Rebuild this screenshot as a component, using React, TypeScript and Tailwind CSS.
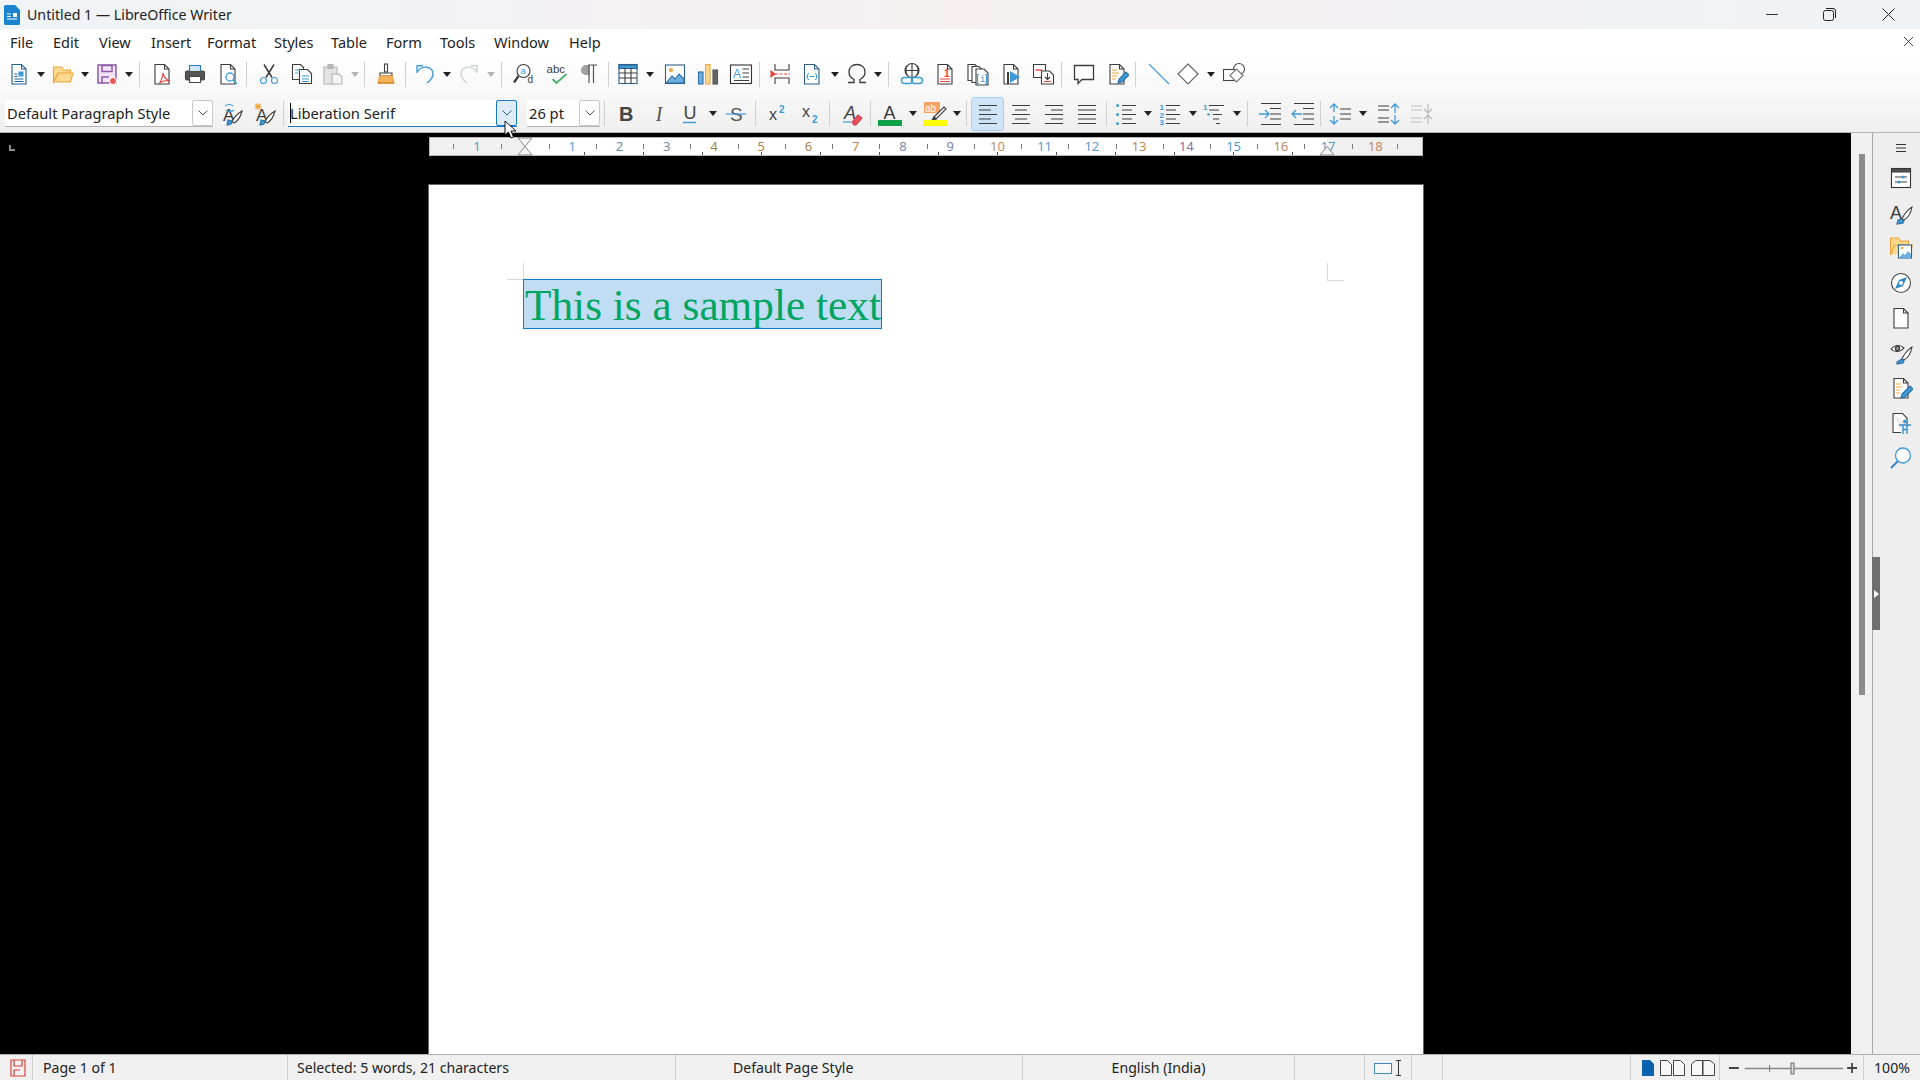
import type { ReactNode } from 'react'

const DK = '#3c3c3c'
const BL = '#3f9bd8'
const OR = '#f2a33a'
const GR = '#b4b4b4'

function I({ children, size = 24 }: { children: ReactNode; size?: number }) {
  return (
    <svg width={size} height={size} viewBox="0 0 24 24" fill="none" stroke={DK} strokeWidth="1.1">
      {children}
    </svg>
  )
}

const Page = ({ s = DK, fill = '#fff' }: { s?: string; fill?: string }) => (
  <path d="M5 2.500h9.500l4.500 4.500v15H5zM14.500 2.500V7H19" stroke={s} fill={fill} />
)

const icons: Record<string, ReactNode> = {
  new: (
    <>
      <Page s="#1f5f93" />
      <path d="M7.500 12h3M7.500 14.500h3M7.500 17h9M7.500 19.500h9" stroke="#1f5f93" />
      <rect x="11.500" y="9.500" width="5" height="5" fill={BL} stroke="none" />
    </>
  ),
  open: <path d="M2.500 20V5h8l2 3h7v3H7.500zM2.500 20h17l2.500-9H7z" fill="#fbd88f" stroke={OR} />,
  save: (
    <>
      <path d="M3 3h18v18H3z" fill="#f0e4f5" stroke="#8d5aa9" strokeWidth="1.500" />
      <path d="M7 3.500h10v6H7zM7 21v-6h7" stroke="#8d5aa9" strokeWidth="1.500" />
      <circle cx="18" cy="19" r="3.500" fill="#ea5a5a" stroke="#fff" />
    </>
  ),
  pdf: (
    <>
      <Page />
      <path d="M13 11c1 4 3 7 7 8-4-1-9 0-11 3 2-3 4-7 4-11z" stroke="#e0483e" fill="none" />
    </>
  ),
  print: (
    <>
      <rect x="2.500" y="9" width="19" height="9" rx="1.500" fill="#555" stroke="#444" />
      <path d="M6.500 9V3.500h11V9" fill="#cfe6f6" stroke="#2f7fb8" />
      <path d="M6.500 14.500h11v6h-11z" fill="#fff" stroke="#444" />
    </>
  ),
  preview: (
    <>
      <Page />
      <circle cx="14" cy="15" r="4" stroke={BL} fill="#fff" strokeWidth="1.300" />
      <path d="M17 18l4 4" stroke={BL} strokeWidth="1.600" />
    </>
  ),
  cut: (
    <>
      <path d="M7 2.500l8 13M17 2.500l-8 13" strokeWidth="1.500" />
      <circle cx="6.500" cy="18.500" r="3" stroke={BL} />
      <circle cx="17.500" cy="18.500" r="3" stroke={BL} />
    </>
  ),
  copy: (
    <>
      <path d="M2.500 2.500h8l3 3v12h-11z" fill="#fff" />
      <path d="M9.500 7.500h8l4 4v10h-12z" fill="#fff" />
      <path d="M5 8h5M5 11h3M12 14h7M12 17h7M12 19.500h7" stroke={BL} />
    </>
  ),
  paste: (
    <>
      <path d="M3 5h13v17H3z" fill="#e4e4e4" stroke={GR} />
      <rect x="7" y="2.500" width="5" height="4" fill="#bbb" stroke={GR} />
      <path d="M11 12h7l3 3v7H11z" fill="#f4f4f4" stroke={GR} />
    </>
  ),
  clone: (
    <>
      <path d="M10.500 2h3v8h-3z" fill="#fff" />
      <path d="M6 11h12v3H6z" fill="#fff" />
      <path d="M5.500 14h13l1.500 7H4z" fill="#f6b35e" stroke={OR} />
      <path d="M4 21h16" stroke="#c96f14" />
    </>
  ),
  undo: (
    <>
      <path d="M4.500 9.500C9 3 19 4 20 11c.5 4-2 7-6 10" stroke={BL} strokeWidth="1.400" />
      <path d="M10 3.500L4 4v7" stroke={BL} strokeWidth="1.400" />
    </>
  ),
  redo: (
    <>
      <path d="M19.500 9.500C15 3 5 4 4 11c-.5 4 2 7 6 10" stroke="#cfd3d6" strokeWidth="1.400" />
      <path d="M14 3.500l6 .5v7" stroke="#cfd3d6" strokeWidth="1.400" />
    </>
  ),
  find: (
    <>
      <circle cx="11.500" cy="9" r="6.500" />
      <path d="M6.500 14L2 20.500" strokeWidth="2.200" />
      <text x="8.500" y="12" fontSize="9.500" fill={BL} stroke="none" fontFamily="Liberation Sans">a</text>
      <text x="15.500" y="21" fontSize="10" fill={DK} stroke="none" fontFamily="Liberation Sans">d</text>
    </>
  ),
  spell: (
    <>
      <text x="1.500" y="11" fontSize="11.500" fill={DK} stroke="none" fontFamily="Liberation Sans">abc</text>
      <path d="M7.500 17l4 4 10-9" stroke="#45b36b" strokeWidth="1.800" />
    </>
  ),
  pilcrow: (
    <>
      <path d="M11 3.500H8a4.500 4.500 0 000 9h3z" fill="#a0a0a0" stroke="#a0a0a0" />
      <path d="M11 3v18M15.500 3v18M10 3h9" stroke="#555" strokeWidth="1.200" />
    </>
  ),
  table: (
    <>
      <rect x="3" y="2.500" width="18" height="19" fill="#fff" stroke="#2c5f88" />
      <path d="M3 3h18v3.500H3z" fill={BL} stroke="#2c5f88" />
      <path d="M3 11h18M3 16h18M9 6.500v15M15 6.500v15" stroke={DK} />
    </>
  ),
  image: (
    <>
      <rect x="2.500" y="3" width="19" height="18.500" fill="#fff" stroke="#2c5f88" />
      <circle cx="8" cy="8" r="2" fill={OR} stroke="none" />
      <path d="M3 21l6-7 3 3 4-5 5 5v4z" fill="#6eaee0" stroke="#2c6ea0" />
    </>
  ),
  chart: (
    <>
      <rect x="2.500" y="10" width="4.500" height="12" fill="#6eaee0" stroke="#2c6ea0" />
      <rect x="9.500" y="2.500" width="4.500" height="19.500" fill="#fbd88f" stroke={OR} />
      <rect x="17" y="8" width="4.500" height="14" fill="#666" stroke="#555" />
    </>
  ),
  textbox: (
    <>
      <rect x="1.500" y="3" width="21" height="18.500" fill="#fff" stroke="#333" />
      <text x="4" y="16" fontSize="12" fill={BL} stroke="none" fontFamily="Liberation Sans">A</text>
      <path d="M13.500 7h6.500M13.500 11h6.500M13.500 15h6.500M5 18.500h15" />
    </>
  ),
  pagebreak: (
    <>
      <path d="M5 2v6h14V2M5 22v-6h14v6" />
      <path d="M5 12h15" stroke="#e0483e" strokeDasharray="3 1.500" />
      <path d="M1 9l4 3-4 3z" fill="#e0483e" stroke="#e0483e" />
    </>
  ),
  field: (
    <>
      <path d="M4.500 2.500h10l4.500 4.500v15H4.500zM14.500 2.500V7H19" stroke="#2c5f88" fill="#fff" />
      <path d="M9 11.500c-2 0-1 2-2 3 1 1 0 3 2 3M15 11.500c2 0 1 2 2 3-1 1 0 3-2 3M9.500 14.500h5" stroke={BL} />
    </>
  ),
  omega: <path d="M3 20.500h6v-3c-3-1.500-5-4-5-7.500 0-5 3.500-7.500 8-7.500s8 2.500 8 7.500c0 3.500-2 6-5 7.500v3h6" strokeWidth="1.300" />,
  link: (
    <>
      <circle cx="12" cy="8.500" r="7" />
      <path d="M5 8.500h14M12 1.500v14M7.500 3.500c-2 3-2 7 0 10M16.500 3.500c2 3 2 7 0 10" />
      <rect x="1.500" y="15.500" width="11" height="6" rx="3" fill="#fff" stroke={BL} strokeWidth="1.400" />
      <rect x="11.500" y="15.500" width="11" height="6" rx="3" stroke={BL} strokeWidth="1.400" />
    </>
  ),
  foot: (
    <>
      <Page />
      <text x="11" y="14.500" fontSize="10" fill="#e0483e" stroke="none" fontFamily="Liberation Sans" fontWeight="700">1</text>
      <path d="M7 17h10M7 19.500h10" stroke="#e0483e" />
    </>
  ),
  end: (
    <>
      <path d="M2 2.500h7l3 3v13H2z" fill="#fff" />
      <path d="M6 4.500h7l3 3v13H6z" fill="#fff" />
      <path d="M10 7h8l4 4v12H10z" fill="#fff" />
      <text x="14" y="20" fontSize="9" fill={BL} stroke="none" fontFamily="Liberation Mono">i</text>
      <path d="M13 12.500h-1.500v9H13M19 12.500h1.500v9H19" stroke={BL} />
    </>
  ),
  bookmark: (
    <>
      <Page />
      <path d="M9 10v12" strokeWidth="2" />
      <path d="M11 9l10 6-10 6z" fill={BL} stroke="none" />
    </>
  ),
  cross: (
    <>
      <path d="M1.500 2.500h12v13h-12z" fill="#fff" />
      <path d="M9.500 9h8l4 4v9h-12z" fill="#fff" />
      <path d="M3.500 8h7" stroke="#e0483e" strokeWidth="1.400" />
      <path d="M15.500 11v6M13 15l2.500 2.500 2.500-2.500" />
      <path d="M12 19.500h7" stroke="#e0483e" />
    </>
  ),
  comment: <path d="M2.500 3.500h19v14H10l-4 4v-4H2.500z" fill="#fff" strokeWidth="1.300" />,
  track: (
    <>
      <Page />
      <path d="M7 8h5M7 11h7M7 14h5M7 17h4" stroke={OR} />
      <path d="M13 21l1-4 7-7 3 3-7 7z" fill={BL} stroke="#2c6ea0" />
    </>
  ),
  line: <path d="M3 2l20 20" stroke={BL} strokeWidth="1.100" />,
  shape: <path d="M12 2l10 10-10 10L2 12z" stroke="#666" strokeWidth="1.200" fill="#fff" />,
  draw: (
    <>
      <circle cx="17" cy="7" r="5.500" fill="#fff" stroke="#444" />
      <rect x="1.500" y="7.500" width="11" height="11" fill="#fff" stroke="#444" />
      <path d="M14.500 7l6.500 6.500-6.500 6.500L8 13.500z" fill="#fff" stroke="#777" />
    </>
  ),
  updateStyle: (
    <>
      <text x="3" y="19" fontSize="17" fill={DK} stroke="none" fontFamily="Liberation Sans">A</text>
      <path d="M12 20c1-3 5-8 10-11-1 4-4 10-8 12z" fill="#fff" />
      <path d="M8 18l4 1-1 3-4 1z" fill={BL} stroke="#2c6ea0" />
      <path d="M5 4c2-2 6-2 8 0M6 8c2 2 6 2 8 0" stroke={BL} />
    </>
  ),
  newStyle: (
    <>
      <text x="3" y="19" fontSize="17" fill={DK} stroke="none" fontFamily="Liberation Sans">A</text>
      <path d="M12 20c1-3 5-8 10-11-1 4-4 10-8 12z" fill="#fff" />
      <path d="M8 18l4 1-1 3-4 1z" fill={BL} stroke="#2c6ea0" />
      <path d="M5 1v7M1.500 4.500h7M2.500 2l5 5M7.500 2l-5 5" stroke={OR} />
    </>
  ),
  bold: <text x="5" y="19" fontSize="20" fontWeight="700" fill="#444" stroke="none" fontFamily="Liberation Sans">B</text>,
  italic: <text x="8.700" y="19" fontSize="20" fontStyle="italic" fill="#555" stroke="none" fontFamily="Liberation Serif">I</text>,
  underline: (
    <>
      <text x="5.500" y="17" fontSize="18" fill="#444" stroke="none" fontFamily="Liberation Sans">U</text>
      <path d="M5 20.500h13" stroke={BL} strokeWidth="1.400" />
    </>
  ),
  strike: (
    <>
      <text x="6" y="19" fontSize="19" fill="#555" stroke="none" fontFamily="Liberation Sans">S</text>
      <path d="M2 12h20" stroke={BL} strokeWidth="1.200" />
    </>
  ),
  sup: (
    <>
      <text x="3" y="18" fontSize="16" fill="#444" stroke="none" fontFamily="Liberation Sans">x</text>
      <text x="13" y="11" fontSize="10" fontWeight="700" fill={BL} stroke="none" fontFamily="Liberation Sans">2</text>
    </>
  ),
  sub: (
    <>
      <text x="3" y="15" fontSize="16" fill="#444" stroke="none" fontFamily="Liberation Sans">x</text>
      <text x="13" y="21" fontSize="10" fontWeight="700" fill={BL} stroke="none" fontFamily="Liberation Sans">2</text>
    </>
  ),
  clear: (
    <>
      <text x="4" y="17" fontSize="18" fontStyle="italic" fill="#444" stroke="none" fontFamily="Liberation Sans">A</text>
      <path d="M3 20h8" stroke={BL} strokeWidth="1.200" />
      <path d="M12 20l6-7 4 3-6 7h-2z" fill="#e8505b" stroke="#d8404b" />
    </>
  ),
  fontColor: (
    <>
      <text x="5.500" y="17" fontSize="18" fill="#3a3a3a" stroke="none" fontFamily="Liberation Sans">A</text>
      <rect x="0" y="18" width="24" height="6" fill="#0fa14a" stroke="none" />
    </>
  ),
  highlight: (
    <>
      <rect x="1" y="0" width="16" height="11" fill="#f5a560" stroke="none" />
      <text x="2" y="10" fontSize="10" fill="#fff" stroke="none" fontFamily="Liberation Sans">ab</text>
      <path d="M11 15l10-10 2 2-10 10z" fill="#fff" />
      <path d="M9 18l2-3 2 2z" fill="#333" />
      <rect x="0" y="18" width="24" height="6" fill="#ffff00" stroke="none" />
    </>
  ),
  left: <path d="M3 3.500h18M3 8h12M3 12.500h18M3 17h12M3 21.500h18" />,
  center: <path d="M3 3.500h18M6 8h12M3 12.500h18M6 17h12M3 21.500h18" />,
  right: <path d="M3 3.500h18M9 8h12M3 12.500h18M9 17h12M3 21.500h18" />,
  justify: <path d="M3 3.500h18M3 8h18M3 12.500h18M3 17h18M3 21.500h18" />,
  bullets: (
    <>
      <path d="M8 3.500h14M8 8h10M8 12.500h14M8 17h10M8 21.500h14" />
      <circle cx="3.500" cy="3.500" r="1.500" fill={BL} stroke="none" />
      <circle cx="3.500" cy="12.500" r="1.500" fill={BL} stroke="none" />
      <circle cx="3.500" cy="21.500" r="1.500" fill={BL} stroke="none" />
    </>
  ),
  numbered: (
    <>
      <path d="M8 3.500h14M8 8h10M8 12.500h14M8 17h10M8 21.500h14" />
      <text x="1.500" y="8" fontSize="8" fontWeight="700" fill={BL} stroke="none" fontFamily="Liberation Sans">1</text>
      <text x="1.500" y="15.500" fontSize="8" fontWeight="700" fill={BL} stroke="none" fontFamily="Liberation Sans">2</text>
      <text x="1.500" y="23" fontSize="8" fontWeight="700" fill={BL} stroke="none" fontFamily="Liberation Sans">3</text>
    </>
  ),
  outline: (
    <>
      <path d="M7 3.500h15M7 8h10M11 12.500h9M11 17h6M14 21.500h4" />
      <text x="1" y="8" fontSize="8" fontWeight="700" fill={BL} stroke="none" fontFamily="Liberation Sans">1</text>
      <circle cx="6.500" cy="12.500" r="1.300" fill={BL} stroke="none" />
    </>
  ),
  indentInc: (
    <>
      <path d="M3 1.500h20M12 6.500h11M12 12h11M12 17h11M3 22.500h20" />
      <path d="M1 12h10M7 8l4 4-4 4" stroke={BL} strokeWidth="1.300" />
    </>
  ),
  indentDec: (
    <>
      <path d="M3 1.500h20M12 6.500h11M12 12h11M12 17h11M3 22.500h20" />
      <path d="M11 12H1M5 8l-4 4 4 4" stroke={BL} strokeWidth="1.300" />
    </>
  ),
  spacing: (
    <>
      <path d="M12 7h11M12 12h11M12 17h11" />
      <path d="M6 2v8M2 6l4-4 4 4M6 14v8M2 18l4 4 4-4" stroke={BL} strokeWidth="1.300" />
    </>
  ),
  paraInc: (
    <>
      <path d="M2 4h11M2 8h11M2 16h11M2 20h11" />
      <path d="M19 11V2M15 6l4-4 4 4M19 13v9M15 18l4 4 4-4" stroke={BL} strokeWidth="1.300" />
    </>
  ),
  paraDec: (
    <>
      <path d="M2 4h11M2 8h11M2 16h11M2 20h11" stroke="#bdbdbd" />
      <path d="M19 2v9M15 7l4 4 4-4M19 22v-9M15 17l4-4 4 4" stroke="#bdbdbd" strokeWidth="1.300" />
    </>
  ),
  props: (
    <>
      <rect x="2.500" y="2.500" width="19" height="19" fill="#fff" stroke="#333" />
      <path d="M2.500 3h19v3h-19z" fill="#555" />
      <path d="M6 11h12M6 16h12" />
      <circle cx="14" cy="11" r="1.500" fill={BL} stroke="none" />
      <circle cx="10" cy="16" r="1.500" fill={BL} stroke="none" />
    </>
  ),
  styles: (
    <>
      <text x="1" y="18" fontSize="18" fill={DK} stroke="none" fontFamily="Liberation Sans">A</text>
      <path d="M13 18c1-3 5-9 10-12-1 5-4 11-8 13z" fill="#fff" />
      <path d="M9 19l4-1 2 2-1 2-6 1z" fill={BL} stroke="#2c6ea0" />
    </>
  ),
  gallery: (
    <>
      <path d="M1.500 19V2h8l2 3h8v3M1.500 19l4-10h18l-3 8" fill="#fbd88f" stroke={OR} />
      <rect x="9.500" y="9" width="13" height="13" fill="#fff" stroke="#2c5f88" />
      <path d="M10 22l4-5 2 2 3-4 3 3v4z" fill="#6eaee0" stroke="none" />
      <circle cx="13" cy="12" r="1.300" fill={OR} stroke="none" />
    </>
  ),
  navigator: (
    <>
      <circle cx="12" cy="12" r="9.500" fill="#fff" stroke="#444" />
      <path d="M18 6l-8 3-4 9 8-3z" fill="#2f88c9" stroke="none" />
      <circle cx="12" cy="12" r="2" fill="#fff" stroke="none" />
    </>
  ),
  page: <path d="M5 2.500h9.500l4.500 4.500v15H5zM14.500 2.500V7H19" fill="#fff" />,
  inspector: (
    <>
      <path d="M2 8c3-4 9-5 13-1-3 4-10 5-13 1z" fill="#fff" />
      <circle cx="8.500" cy="7.500" r="2.200" fill="#888" />
      <path d="M13 18c1-3 5-9 10-12-1 5-4 11-8 13z" fill="#fff" />
      <path d="M8 21l5-3 2 2-1 2-6 1z" fill={BL} stroke="#2c6ea0" />
    </>
  ),
  manage: (
    <>
      <Page />
      <path d="M7 8h5M7 11h6M7 14h4M7 17h4" stroke={OR} />
      <path d="M12 22l1-4 8-8 3 3-8 8z" fill={BL} stroke="#2c6ea0" />
    </>
  ),
  access: (
    <>
      <path d="M4 2.500h9.500l4.500 4.500v6M12 21.500H4v-19" fill="#fff" />
      <circle cx="16" cy="10.500" r="2" fill={BL} stroke="none" />
      <path d="M10 14h12M14 14v9M18 14v9M14 18.500h4" stroke="#2f88c9" strokeWidth="1.300" />
    </>
  ),
  search: (
    <>
      <circle cx="14" cy="9.500" r="7.500" stroke={BL} fill="#fff" strokeWidth="1.300" />
      <path d="M9 15l-7 7" stroke="#2f88c9" strokeWidth="2" />
    </>
  ),
}

function Tool({ name, w = 'w-[33px]', active }: { name: string; w?: string; active?: boolean }) {
  return (
    <div
      className={`${w} h-[34px] shrink-0 flex items-center justify-center rounded-[3px] ${
        active ? 'bg-[#cde4f9] border border-[#a9d0f0]' : ''
      }`}
    >
      <I>{icons[name]}</I>
    </div>
  )
}

function Drop({ w = 'w-[14px]', off }: { w?: string; off?: boolean }) {
  return (
    <div className={`${w} h-[34px] shrink-0 flex items-center justify-center`}>
      <div
        className={`w-0 h-0 border-x-[4px] border-x-transparent border-t-[5px] ${
          off ? 'border-t-[#b4b4b4]' : 'border-t-[#222]'
        }`}
      />
    </div>
  )
}

const Sep = ({ m }: { m: string }) => <div className={`${m} w-px h-[25px] shrink-0 bg-[#cfcfcf]`} />

function Chevron({ blue }: { blue?: boolean }) {
  return (
    <svg width="10" height="6" viewBox="0 0 10 6" fill="none" stroke={blue ? '#1f5f93' : '#555'}>
      <path d="M.5.500L5 5l4.500-4.500" />
    </svg>
  )
}

function Combo({ text, w, focused }: { text: string; w: string; focused?: boolean }) {
  return (
    <div
      className={`${w} h-[27px] shrink-0 flex items-stretch bg-white border-b ${
        focused ? 'border-b-[#1a78c2]' : 'border-b-[#b5b5b5]'
      }`}
    >
      <div className="flex-1 flex items-center pl-[2px] text-[14.700px] text-[#222]">
        {focused && <div className="w-px h-[20px] bg-black mr-[-1px]" />}
        {text}
      </div>
      <div
        className={`w-[21px] flex items-center justify-center border rounded-[2px] ${
          focused ? 'bg-[#dfecf8] border-[#1a78c2]' : 'bg-white border-[#c8c8c8]'
        }`}
      >
        <Chevron blue={focused} />
      </div>
    </div>
  )
}

const menus = [
  ['File', 'w-[43px]'],
  ['Edit', 'w-[46px]'],
  ['View', 'w-[52px]'],
  ['Insert', 'w-[56px]'],
  ['Format', 'w-[67px]'],
  ['Styles', 'w-[57px]'],
  ['Table', 'w-[55px]'],
  ['Form', 'w-[54px]'],
  ['Tools', 'w-[54px]'],
  ['Window', 'w-[75px]'],
  ['Help', 'w-[50px]'],
]

function Ruler() {
  const nums = Array.from({ length: 18 }, (_, i) => i + 1)
  const numColors = ['#5a9ad0', '#6a86a8', '#7a8aa0', '#8a8a60', '#b08050', '#b08050', '#c08a60', '#7a86b0', '#7a86b0', '#c08a60', '#5a9ad0', '#5a9ad0', '#c08a50', '#8a70a8', '#5a9ad0', '#c08a60', '#5a9ad0', '#c08a60']
  return (
    <svg width="994" height="19" viewBox="0 0 994 19" className="block">
      <rect x="0.500" y="0.500" width="993" height="18" fill="#f0f0f0" stroke="#b5b5b5" />
      <rect x="96" y="1" width="802" height="17" fill="#fff" />
      <text x="48" y="14" fontSize="13" textAnchor="middle" fill="#5a9ad0" fontFamily="Noto Sans">1</text>
      <path d="M24.500 7v5M72.500 7v5" stroke="#777" />
      {nums.map((n, i) => {
        const x = 96 + 47.24 * n
        return (
          <g key={n}>
            <text x={x} y="14" fontSize="13" textAnchor="middle" fill={numColors[i]} fontFamily="Noto Sans">{n}</text>
            <path d={`M${Math.round(x - 23.6) + 0.5} 7v5`} stroke="#777" />
          </g>
        )
      })}
      <path d="M968.500 7v5" stroke="#777" />
      {Array.from({ length: 13 }, (_, i) => (
        <path key={i} d={`M${96 + 59 * (i + 1) + 0.5} 15v3`} stroke="#555" />
      ))}
      <path d="M89 1h14l-7 8.500zM89 18h14l-7-8.500z" fill="#f4f4f4" stroke="#888" />
      <path d="M891 18h14l-7-8.500z" fill="#f4f4f4" stroke="#888" />
    </svg>
  )
}

export default function App() {
  const stat = 'h-full flex items-center shrink-0 border-r border-[#cfcfcf]'
  return (
    <div
      className="w-[1920px] h-[1080px] flex flex-col overflow-hidden bg-black text-[#222]"
      style={{ fontFamily: '"Noto Sans", sans-serif' }}
    >
      {/* title bar */}
      <div className="h-[29px] shrink-0 flex items-center bg-gradient-to-r from-[#eff4f6] via-[#f6f0f1] to-[#eff3f5]">
        <svg width="16" height="20" viewBox="0 0 16 20" className="ml-[4px]">
          <path d="M1.500 0H11l5 5v13.500a1.500 1.500 0 01-1.500 1.500h-13A1.500 1.500 0 010 18.500v-17A1.500 1.500 0 011.500 0z" fill="#1b84cf" />
          <path d="M3 9h4M3 11.500h4M3 14h10" stroke="#fff" />
          <rect x="9" y="8" width="4" height="4" fill="#fff" />
        </svg>
        <span className="ml-[7px] text-[14.200px] text-[#222]">Untitled 1 — LibreOffice Writer</span>
        <div className="ml-auto flex items-center">
          <div className="w-[54px] flex justify-center"><div className="w-[12px] h-px bg-[#333]" /></div>
          <div className="w-[60px] flex justify-center">
            <svg width="13" height="13" viewBox="0 0 13 13" fill="none" stroke="#222">
              <rect x=".5" y="2.500" width="10" height="10" rx="2" />
              <path d="M3 .5h7a2.500 2.500 0 012.500 2.500v7" />
            </svg>
          </div>
          <div className="w-[61px] pr-[3px] flex justify-center">
            <svg width="13" height="13" viewBox="0 0 13 13" fill="none" stroke="#222">
              <path d="M.5.5l12 12M12.500.5l-12 12" />
            </svg>
          </div>
        </div>
      </div>

      {/* menu bar */}
      <div className="h-[29px] shrink-0 flex items-center bg-white pl-[10px] pb-[1px] text-[14.500px] text-[#222]">
        {menus.map(([m, w]) => (
          <div key={m} className={w}>{m}</div>
        ))}
        <svg width="11" height="11" viewBox="0 0 11 11" fill="none" stroke="#444" className="ml-auto mr-[6px] mb-[4px]">
          <path d="M1 1l9 9M10 1l-9 9" />
        </svg>
      </div>

      {/* toolbars */}
      <div className="h-[75px] shrink-0 bg-gradient-to-b from-[#ffffff] to-[#efefef] border-b border-[#b4b4b4]">
        <div className="h-[32px] mb-[5px] flex items-center pl-[4px]">
          <Tool name="new" w="w-[30px]" /><Drop />
          <Tool name="open" w="w-[30px]" /><Drop />
          <Tool name="save" w="w-[30px]" /><Drop />
          <Sep m="ml-[3px] mr-[5px]" />
          <Tool name="pdf" /><Tool name="print" /><Tool name="preview" />
          <Sep m="ml-[2px] mr-[5px]" />
          <Tool name="cut" /><Tool name="copy" />
          <Tool name="paste" w="w-[30px]" /><Drop off />
          <Sep m="ml-[2px] mr-[4px]" />
          <Tool name="clone" />
          <Sep m="ml-[3px] mr-[4px]" />
          <Tool name="undo" w="w-[30px]" /><Drop />
          <Tool name="redo" w="w-[30px]" /><Drop off />
          <Sep m="ml-[3px] mr-[5px]" />
          <Tool name="find" /><Tool name="spell" /><Tool name="pilcrow" />
          <Sep m="ml-[2px] mr-[5px]" />
          <Tool name="table" w="w-[28px]" /><Drop w="w-[16px]" />
          <Tool name="image" /><Tool name="chart" /><Tool name="textbox" />
          <Sep m="ml-[2px] mr-[5px]" />
          <Tool name="pagebreak" />
          <Tool name="field" w="w-[28px]" /><Drop w="w-[18px]" />
          <Tool name="omega" w="w-[26px]" /><Drop w="w-[16px]" />
          <Sep m="ml-[2px] mr-[6px]" />
          <Tool name="link" /><Tool name="foot" /><Tool name="end" /><Tool name="bookmark" /><Tool name="cross" />
          <Sep m="ml-[1px] mr-[5px]" />
          <Tool name="comment" /><Tool name="track" />
          <Sep m="ml-[2px] mr-[5px]" />
          <Tool name="line" />
          <Tool name="shape" w="w-[28px]" /><Drop w="w-[18px]" />
          <Tool name="draw" w="w-[28px]" />
        </div>
        <div className="h-[37px] flex items-center pl-[5px]">
          <Combo text="Default Paragraph Style" w="w-[208px]" />
          <div className="ml-[2px]"><Tool name="updateStyle" /></div>
          <Tool name="newStyle" />
          <Sep m="ml-[2px] mr-[4px]" />
          <Combo text="Liberation Serif" w="w-[229px]" focused />
          <div className="ml-[10px]"><Combo text="26 pt" w="w-[73px]" /></div>
          <Sep m="ml-[4px] mr-[4px]" />
          <Tool name="bold" /><Tool name="italic" />
          <Tool name="underline" w="w-[30px]" /><Drop w="w-[16px]" />
          <Tool name="strike" w="w-[30px]" />
          <Sep m="ml-[4px] mr-[5px]" />
          <Tool name="sup" /><Tool name="sub" />
          <Sep m="ml-[2px] mr-[5px]" />
          <Tool name="clear" />
          <Sep m="ml-[2px] mr-[4px]" />
          <Tool name="fontColor" w="w-[30px]" /><Drop w="w-[16px]" />
          <Tool name="highlight" w="w-[28px]" /><Drop w="w-[16px]" />
          <Sep m="ml-[1px] mr-[4px]" />
          <Tool name="left" active /><Tool name="center" /><Tool name="right" /><Tool name="justify" />
          <Sep m="ml-[3px] mr-[4px]" />
          <Tool name="bullets" w="w-[30px]" /><Drop />
          <Tool name="numbered" w="w-[30px]" /><Drop w="w-[15px]" />
          <Tool name="outline" w="w-[28px]" /><Drop w="w-[18px]" />
          <Sep m="ml-[1px] mr-[5px]" />
          <Tool name="indentInc" /><Tool name="indentDec" />
          <Sep m="ml-[1px] mr-[4px]" />
          <Tool name="spacing" w="w-[30px]" /><Drop w="w-[16px]" />
          <Tool name="paraInc" /><Tool name="paraDec" />
        </div>
      </div>

      {/* document area */}
      <div className="flex-1 min-h-0 flex">
        <div className="w-[1851px] shrink-0 bg-black flex flex-col">
          <div className="flex pt-[4px]">
            <div className="w-[429px] pl-[9px] pt-[8px]">
              <div className="w-[6px] h-[6px] border-l-2 border-b-2 border-[#8a8a8a]" />
            </div>
            <Ruler />
          </div>
          <div className="ml-[428px] w-[996px] mt-[28px] flex-1 bg-white border-x border-t border-[#666] pl-[94px] pt-[94px] relative">
            <div className="absolute left-[94px] top-[78px] w-[1px] h-[16px] bg-[#d8d8d8]" />
            <div className="absolute left-[78px] top-[94px] w-[16px] h-[1px] bg-[#d8d8d8]" />
            <div className="absolute left-[898px] top-[78px] w-[1px] h-[17px] bg-[#d8d8d8]" />
            <div className="absolute left-[898px] top-[95px] w-[17px] h-[1px] bg-[#d8d8d8]" />
            <div
              className="w-[359px] h-[50px] pl-[1px] bg-[#c0ddf3] border border-[#0f7dc2] text-[43.300px] leading-[50px] whitespace-nowrap text-[#00a562] overflow-hidden"
              style={{ fontFamily: '"Liberation Serif", serif' }}
            >
              This is a sample text
            </div>
          </div>
        </div>

        {/* scrollbar */}
        <div className="w-[21px] shrink-0 bg-[#f0f0f0] pl-[8px] pt-[21px]">
          <div className="w-[6px] h-[541px] bg-[#8c8c8c]" />
        </div>

        {/* sidebar */}
        <div className="flex-1 bg-[#eeeeee] border-l border-[#a8a8a8] relative flex flex-col items-center pt-[5px] pl-[8px]">
          <div className="absolute left-[-1px] top-[424px] w-[8px] h-[73px] bg-[#6e6e6e] flex items-center justify-center">
            <div className="w-0 h-0 border-y-[4px] border-y-transparent border-l-[5px] border-l-white" />
          </div>
          <div className="h-[20px] mb-[2px] flex items-center">
            <svg width="14" height="10" viewBox="0 0 14 10" stroke="#333" fill="none">
              <path d="M2 1.500h10M2 5h10M2 8.500h10" />
            </svg>
          </div>
          {['props', 'styles', 'gallery', 'navigator', 'page', 'inspector', 'manage', 'access', 'search'].map(n => (
            <div key={n} className="h-[35px] flex items-center"><I>{icons[n]}</I></div>
          ))}
        </div>
      </div>

      {/* status bar */}
      <div className="h-[26px] shrink-0 bg-[#f0f0f0] border-t border-[#b0b0b0] flex items-center text-[14.100px] text-[#222]">
        <div className={`${stat} w-[33px] pl-[10px]`}>
          <svg width="16" height="18" viewBox="0 0 16 18" fill="none" stroke="#d8443c" strokeWidth="1.200">
            <path d="M1 1h14v16H1zM4 1v6h8V1M4 17v-6h6" />
          </svg>
        </div>
        <div className={`${stat} w-[255px] pl-[10px]`}>Page 1 of 1</div>
        <div className={`${stat} w-[388px] pl-[9px]`}>Selected: 5 words, 21 characters</div>
        <div className={`${stat} w-[347px] pl-[57px]`}>Default Page Style</div>
        <div className={`${stat} w-[272px] justify-center`}>English (India)</div>
        <div className={`${stat} w-[70px]`} />
        <div className={`${stat} w-[47px] justify-center`}>
          <svg width="30" height="18" viewBox="0 0 30 18" fill="none">
            <rect x="1.500" y="4.500" width="17" height="10" stroke="#3f88c0" fill="#f7f7f7" />
            <path d="M23 1.500h5M23 16.500h5M25.500 1.500v15" stroke="#333" />
          </svg>
        </div>
        <div className={`${stat} w-[31px]`} />
        <div className={`${stat} w-[188px]`} />
        <div className={`${stat} w-[89px] pl-[10px] gap-[6px]`}>
          <svg width="13" height="18" viewBox="0 0 13 18"><path d="M1 1h8l4 4v12H1z" fill="#0862b0" /></svg>
          <svg width="25" height="18" viewBox="0 0 25 18" fill="#f7f7f7" stroke="#444">
            <path d="M.5 1.500h7l4 4v11H.5zM13.500 1.500h7l4 4v11h-11z" />
          </svg>
          <svg width="24" height="18" viewBox="0 0 24 18" fill="#f7f7f7" stroke="#444">
            <path d="M.5 5l4-3.500h7v15H.5zM12 1.500h7l4.500 3.500v11.500H12z" />
          </svg>
        </div>
        <div className={`${stat} w-[144px]`}>
          <svg width="144" height="20" viewBox="0 0 144 20" fill="none">
            <path d="M9 10h10M133 5v10M128 10h10" stroke="#444" strokeWidth="1.800" />
            <path d="M25 10.500h99" stroke="#888" strokeWidth="1.500" />
            <path d="M50 7v7" stroke="#777" />
            <rect x="71.500" y="5" width="3" height="11" fill="#ddd" stroke="#666" />
          </svg>
        </div>
        <div className="flex-1 text-center">100%</div>
      </div>

      {/* mouse pointer over the font box */}
      <svg width="14" height="20" viewBox="0 0 14 20" className="absolute left-[504px] top-[120px]">
        <path d="M1 1v14l3.500-3 2.500 6 2.500-1-2.500-6H12z" fill="#fff" stroke="#111" />
      </svg>
    </div>
  )
}
